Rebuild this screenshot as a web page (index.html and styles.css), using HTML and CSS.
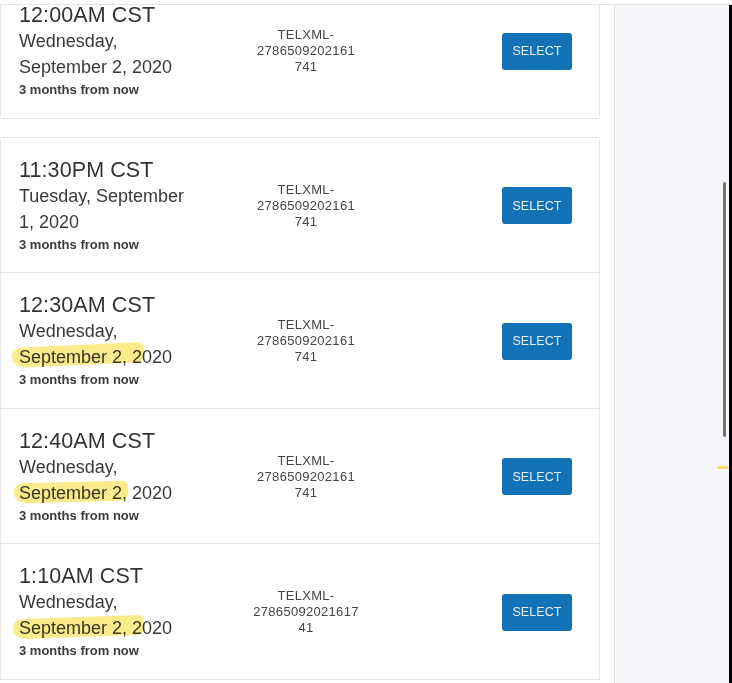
FILE: index.html
```html
<!DOCTYPE html>
<html>
<head>
<meta charset="utf-8">
<link rel="stylesheet" href="styles.css">
</head>
<body>
<div class="page">
  <div class="topbar"></div>
  <div class="main">
    <div class="list">
      <div class="card clipped">
        <div class="row first">
          <div class="when">
            <div class="time">12:00AM CST</div>
            <div class="date">Wednesday, September 2, 2020</div>
            <div class="rel">3 months from now</div>
          </div>
          <div class="ref"><span>TELXML-</span><span>2786509202161</span><span>741</span></div>
          <button class="select">SELECT</button>
        </div>
      </div>
      <div class="card">
        <div class="row">
          <div class="when">
            <div class="time">11:30PM CST</div>
            <div class="date">Tuesday, September 1, 2020</div>
            <div class="rel">3 months from now</div>
          </div>
          <div class="ref"><span>TELXML-</span><span>2786509202161</span><span>741</span></div>
          <button class="select">SELECT</button>
        </div>
        <div class="row">
          <div class="when">
            <div class="time">12:30AM CST</div>
            <div class="date">Wednesday, <span class="hl hl-a">September 2, 2</span>020</div>
            <div class="rel">3 months from now</div>
          </div>
          <div class="ref"><span>TELXML-</span><span>2786509202161</span><span>741</span></div>
          <button class="select">SELECT</button>
        </div>
        <div class="row">
          <div class="when">
            <div class="time">12:40AM CST</div>
            <div class="date">Wednesday, <span class="hl hl-b">September 2,</span> 2020</div>
            <div class="rel">3 months from now</div>
          </div>
          <div class="ref"><span>TELXML-</span><span>2786509202161</span><span>741</span></div>
          <button class="select">SELECT</button>
        </div>
        <div class="row">
          <div class="when">
            <div class="time">1:10AM CST</div>
            <div class="date">Wednesday, <span class="hl hl-c">September 2, 2</span>020</div>
            <div class="rel">3 months from now</div>
          </div>
          <div class="ref"><span>TELXML-</span><span>27865092021617</span><span>41</span></div>
          <button class="select">SELECT</button>
        </div>
      </div>
    </div>
    <div class="gutter"></div>
    <div class="side">
      <div class="scrollbar"></div>
      <div class="mark"></div>
    </div>
    <div class="edge"></div>
  </div>
</div>
</body>
</html>
```

FILE: styles.css
```css
html, body {
  margin: 0;
  padding: 0;
  background: #ffffff;
}
body {
  width: 732px;
  height: 683px;
  overflow: hidden;
  font-family: "Liberation Sans", Arial, sans-serif;
  color: #333333;
}
.page {
  display: flex;
  flex-direction: column;
  height: 683px;
}
.topbar {
  height: 4px;
  border-bottom: 1px solid #e3e4e6;
  flex: none;
}
.main {
  display: flex;
  flex: 1;
  min-height: 0;
}
.list {
  width: 600px;
  flex: none;
  display: flex;
  flex-direction: column;
  gap: 18px;
}
.card {
  border: 1px solid #e6e6e6;
  background: #fff;
}
.card.clipped {
  border-top: none;
  background: transparent;
}
.row {
  display: grid;
  grid-template-columns: 178px 218px 1fr;
  align-items: center;
  padding: 19px 27px 17.5px 18px;
}
.row + .row {
  border-top: 1px solid #e6e6e6;
}
.row.first {
  margin-top: -22px;
}
.time {
  font-size: 21.5px;
  line-height: 26px;
  color: #333;
  letter-spacing: 0.1px;
}
.date {
  font-size: 18px;
  line-height: 26px;
  color: #3a3a3a;
}
.rel {
  font-size: 13px;
  line-height: 20px;
  font-weight: bold;
  color: #3b3b3b;
}
.ref {
  display: flex;
  flex-direction: column;
  align-items: center;
  font-size: 13px;
  line-height: 16px;
  color: #454545;
  letter-spacing: 0.3px;
}
.ref span {
  white-space: nowrap;
}
.select {
  justify-self: end;
  width: 70px;
  height: 37px;
  border: none;
  border-radius: 3px;
  background: #1372b6;
  color: #e6f0f9;
  font-family: "Liberation Sans", Arial, sans-serif;
  font-size: 12.5px;
  letter-spacing: 0.1px;
  padding: 0;
}
.hl {
  position: relative;
}
.hl::before {
  content: "";
  position: absolute;
  left: -7px;
  right: -2px;
  top: -2px;
  bottom: 2px;
  background: rgba(248, 222, 70, 0.62);
  mix-blend-mode: multiply;
  border-radius: 10px 6px 8px 12px;
  transform: rotate(-2.5deg);
}
.hl-b::before {
  left: -5px;
  right: -1px;
  top: -1px;
  bottom: 1px;
  transform: rotate(-1.5deg);
}
.hl-c::before {
  left: -6px;
  top: -1px;
  bottom: 1px;
  transform: rotate(-2deg);
}
.gutter {
  width: 14px;
  flex: none;
}
.side {
  flex: 1;
  position: relative;
  background: #f5f6f9;
  border-left: 1px solid #e6e7ea;
}
.scrollbar {
  position: absolute;
  right: 3px;
  top: 177px;
  width: 3px;
  height: 255px;
  border-radius: 2px;
  background: #727272;
}
.mark {
  position: absolute;
  right: 0;
  top: 461px;
  width: 12px;
  height: 3px;
  border-radius: 2px;
  background: rgba(245, 215, 80, 0.8);
}
.edge {
  width: 3px;
  flex: none;
  background: #000;
}
```
